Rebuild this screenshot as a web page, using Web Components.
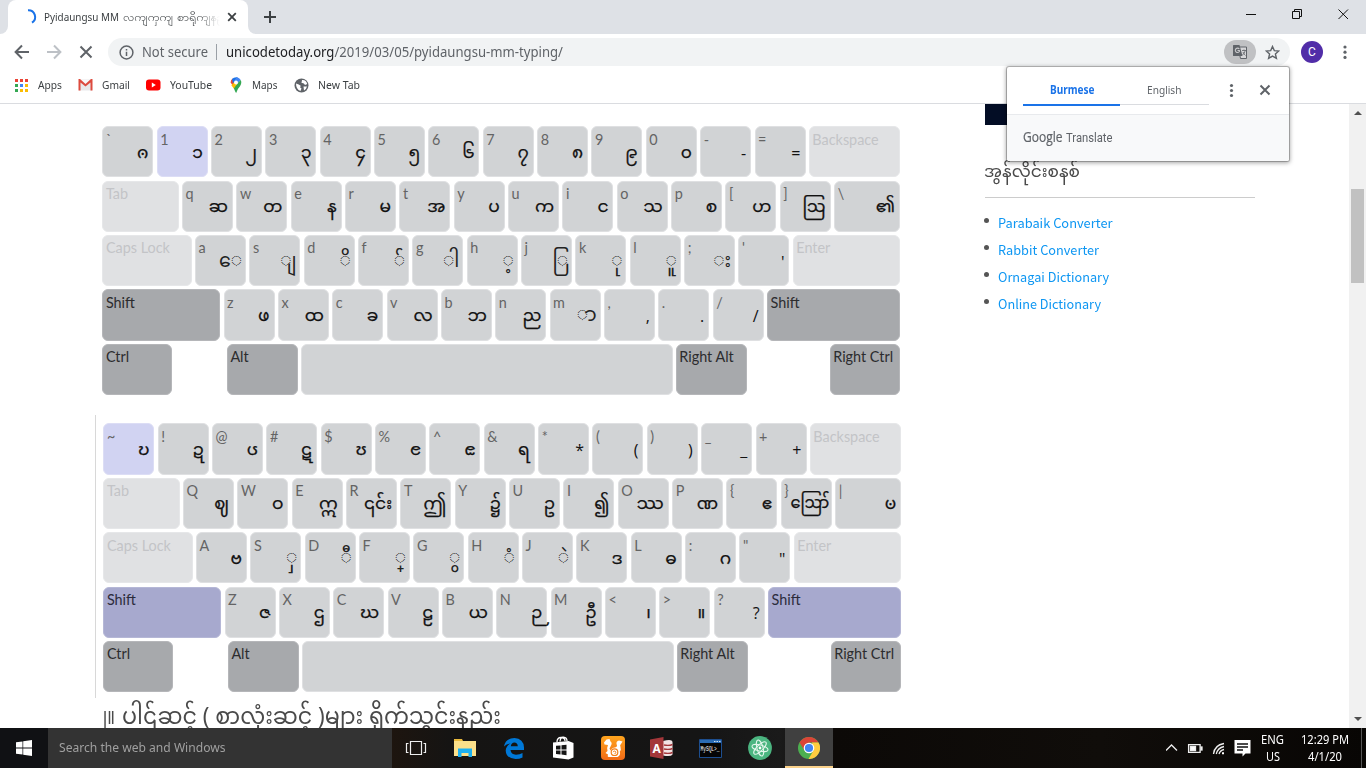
<!DOCTYPE html>
<html lang="en">
<head>
<meta charset="utf-8">
<title>Pyidaungsu MM</title>
<style>
html,body{margin:0;height:100%;overflow:hidden}
body{font-family:"Noto Sans","Liberation Sans",sans-serif}
</style>
</head>
<body>
<desktop-screen></desktop-screen>
<script>
const define = (name, html, setup) => customElements.define(name, class extends HTMLElement {
  connectedCallback() {
    if (this.shadowRoot) return;
    const root = this.attachShadow({mode: 'open'});
    const t = document.createElement('template');
    t.innerHTML = typeof html === 'function' ? html(this) : html;
    root.appendChild(document.importNode(t.content, true));
    if (setup) setup(this, root);
  }
});

/* A single line of text that is stretched or squeezed to the width in "w". */
define('fit-text', `<style>:host{display:block;flex:none;white-space:nowrap}span{display:inline-block;transform-origin:0 50%}</style><span><slot></slot></span>`,
  (el, root) => {
    const w = +el.getAttribute('w'), s = root.querySelector('span');
    const n = s.getBoundingClientRect().width;
    el.style.width = w + 'px';
    if (n) s.style.transform = `scaleX(${w / n})`;
  });

define('key-cap', el => {
  const g = el.getAttribute('glyph') || '';
  const mark = g[0] === '\u25CC';
  const cls = mark ? ' m' : g === 'ဪ' ? ' w' : g.charCodeAt(0) < 128 ? ' a' : '';
  return `<style>
  :host{display:block;box-sizing:border-box;height:51.2px;border-radius:6px;background:#d1d3d5;border:1px solid #dfe0e2;position:relative;color:#646464;font:14.4px/18px Lato,"Liberation Sans",sans-serif;flex:none}
  :host([kind=off]){background:#e0e1e3;border-color:#e6e7e9;color:#c3c4c7}
  :host([kind=mod]){background:#a7a9ac;border-color:#b5b6b9;color:#2c2c2e}
  :host([kind=on]){background:#d1d3f2;border-color:#dcddf5}
  :host([kind=hold]){background:#a7a9ce;border-color:#b5b7d6;color:#2c2c3c}
  :host([kind=none]){visibility:hidden}
  .l{display:block;padding:3.400px 0 0 2.500px;white-space:nowrap}
  .g{position:absolute;right:4px;top:9.500px;font:17px/34px "Pyidaungsu","Noto Sans Myanmar","Padauk","Myanmar Text",Lato,sans-serif;color:#111;-webkit-text-stroke:.25px #111;white-space:nowrap}
  .m{font-size:19px;-webkit-text-stroke:0;right:3px;top:10px;color:#222}
  .w{right:1px;font-size:16px}
  .a{font:16px/34px "Open Sans",sans-serif;-webkit-text-stroke:0;top:8.500px}
  </style><span class="l"><slot></slot></span>${g ? `<span class="g${cls}">${g.replace(/</g,'&lt;')}</span>` : ''}`;
});

const esc = s => s.replace(/&/g,'&amp;').replace(/</g,'&lt;').replace(/"/g,'&quot;');
const C = '\u25CC';
const boards = {
  base: {
    on: '1', shift: 'mod',
    rows: [
      ['`1234567890-=', ['ၐ','၁','၂','၃','၄','၅','၆','၇','၈','၉','၀','-','=']],
      ['qwertyuiop[]', ['ဆ','တ','န','မ','အ','ပ','က','င','သ','စ','ဟ','ဩ']],
      ["asdfghjkl;'", [C+'ေ',C+'ျ',C+'ိ',C+'်',C+'ါ',C+'့',C+'ြ',C+'ု',C+'ူ',C+'း',"'"]],
      ['zxcvbnm,./', ['ဖ','ထ','ခ','လ','ဘ','ည',C+'ာ',',','.','/']]
    ], last: ['\\','၏']
  },
  shift: {
    on: '~', shift: 'hold',
    rows: [
      ['~!@#$%^&*()_+', ['ဎ','ဍ','ၒ','ဋ','ၓ','ၔ','ၕ','ရ','*','(',')','_','+']],
      ['QWERTYUIOP{}', ['ဈ','ဝ','ဣ','၎င်း','ဤ','၌','ဥ','၍','ဿ','ဏ','ဧ','ဪ']],
      ['ASDFGHJKL:"', ['ဗ',C+'ှ',C+'ီ',C+'္',C+'ွ',C+'ံ',C+'ဲ','ဒ','ဓ','ဂ','"']],
      ['ZXCVBNM<>?', ['ဇ','ဌ','ဃ','ဠ','ယ','ဉ','ဦ','၊','။','?']]
    ], last: ['|','ၑ']
  }
};
define('key-board', el => {
  const b = boards[el.getAttribute('layer')];
  const key = (w, label, glyph, kind) => `<key-cap style="width:${w}px" ${kind ? `kind="${kind}"` : ''} ${glyph ? `glyph="${esc(glyph)}"` : ''}>${esc(label)}</key-cap>`;
  const ends = [
    ['', key(91.6,'Backspace','','off')],
    [key(76.3,'Tab','','off'), key(66,b.last[0],b.last[1])],
    [key(89.3,'Caps Lock','','off'), key(107.2,'Enter','','off')],
    [key(117.8,'Shift','',b.shift), key(133,'Shift','',b.shift)]
  ];
  return `<style>:host{display:flex;flex-direction:column;gap:3.2px;width:799px}div{display:flex;gap:3.35px}</style>` +
    b.rows.map((r, i) => `<div>${ends[i][0]}${[...r[0]].map((c, k) => key(51, c, r[1][k], c === b.on ? 'on' : '')).join('')}${ends[i][1]}</div>`).join('') +
    `<div>${key(70,'Ctrl','','mod')}${key(47.8,'','','none')}${key(70.7,'Alt','','mod')}${key(371.6,'','')}${key(70.7,'Right Alt','','mod')}${key(76.5,'','','none')}${key(70.7,'Right Ctrl','','mod')}</div>`;
});

define('browser-tabs', `<style>
:host{display:flex;height:34px;background:#dee1e6;flex:none}
.lead{width:8px;background:#fff}.lead i{display:block;height:34px;background:#dee1e6;border-radius:0 0 8px 0}
.tab{width:240px;background:#fff;border-radius:8px 8px 0 0;display:flex;align-items:center;box-sizing:border-box;padding-left:12px}
.t{width:176px;overflow:hidden;display:flex;gap:4px;margin-left:6px;font:11.500px/20px "Noto Sans",Padauk,sans-serif;color:#3c4043;-webkit-mask:linear-gradient(90deg,#000 88%,transparent)}
.rest{flex:1;background:#fff}.rest div{height:34px;background:#dee1e6;border-radius:0 0 0 8px;display:flex;align-items:center}
.plus{margin-left:15px}.win{margin-left:auto;display:flex}
.x{margin-left:7px}
</style>
<div class="lead"><i></i></div>
<div class="tab">
<svg width="18" height="18" viewBox="0 0 18 18"><path d="M8 2.2A6.8 6.8 0 0 1 12 14.7" fill="none" stroke="#1a73e8" stroke-width="2"/></svg>
<div class="t"><fit-text w="75">Pyidaungsu MM</fit-text><fit-text w="50">လကျကှကျ</fit-text><fit-text w="55">စာရိုကျနည်း</fit-text></div>
<svg class="x" width="10" height="10"><path d="M1.2 1.2l7.6 7.6M8.8 1.2L1.2 8.8" stroke="#3c4043" stroke-width="1.8"/></svg>
</div>
<div class="rest"><div>
<svg class="plus" width="14" height="14"><path d="M7 1v12M1 7h12" stroke="#3c4043" stroke-width="2"/></svg>
<svg class="win" width="121" height="34" viewBox="0 3 121 34" fill="none" stroke="#111" stroke-width="1"><path d="M1 17.500h10M47.500 14.500h7v7h-7zM49.500 14.500v-2h7v7h-2M93.500 12.500l9.500 9.500M103 12.500l-9.500 9.500"/></svg>
</div></div>`);

define('tool-bar', `<style>
:host{display:flex;align-items:center;height:36px;background:#fff;flex:none;padding-left:14px}
.nav{flex:none}
.omni{width:1182px;height:28px;border-radius:14px;background:#f1f3f4;margin-left:12px;display:flex;align-items:center;font-size:14px;line-height:28px;color:#5f6368;box-sizing:border-box;padding-left:11px}
.bar{width:1px;height:16px;background:#9aa0a6;margin:0 9px 0 8px}
.info{margin-right:8px}b{font-weight:400;color:#202124}
.tr{margin-left:auto;width:32px;height:24px;border-radius:12px;background:#c0c1c3;display:flex;align-items:center;justify-content:center}
.star{margin:0 10.500px 0 8.500px}
.av{width:22px;height:22px;border-radius:50%;background:#512da8;color:#fff;font:12px/22px Roboto,sans-serif;text-align:center;margin-left:11px}
.dots{margin-left:20px}
</style>
<svg class="nav" width="82" height="20" fill="none" stroke-width="2"><path d="M15 10H2M8 3.5L1.6 10 8 16.500" stroke="#5f6368"/><path d="M33 10h13M40 3.5l6.400 6.500L40 16.500" stroke="#bdc1c6"/><path d="M66.500 4.500l11 11M77.500 4.500l-11 11" stroke="#5f6368"/></svg>
<div class="omni">
<svg class="info" width="15" height="15" fill="none" stroke="#5f6368" stroke-width="1.500"><circle cx="7.500" cy="7.500" r="6.400"/><path d="M7.500 6.700v4.300M7.500 4v1.500"/></svg>
<fit-text w="66">Not secure</fit-text><span class="bar"></span><fit-text w="337"><b>unicodetoday.org</b>/2019/03/05/pyidaungsu-mm-typing/</fit-text>
<div class="tr"><svg width="16" height="16"><path d="M6 3h8.500v11.500H8.500z" fill="#d6d6d8" stroke="#5f6368"/><path d="M1.500 1H7.500L10.500 12H1.500Q1 12 1 11.500V1.500Q1 1 1.500 1z" fill="#5f6368"/><path d="M7.300 5A2.200 2.200 0 1 0 7.400 7.500V6.500H5.500" fill="none" stroke="#c8c8ca" stroke-width="1.100"/><path d="M10 6.500h4M12 5.500v1M13.300 6.500Q12.500 9.500 10.500 11M11 8Q12 10.500 13.500 11.500" fill="none" stroke="#5f6368" stroke-width=".8"/></svg></div>
<svg class="star" width="15" height="15"><path d="M7.500 1.500l1.800 4.100 4.500.4-3.400 3 1 4.400-3.900-2.300-3.900 2.300 1-4.400-3.400-3 4.500-.4z" fill="none" stroke="#5f6368" stroke-width="1.400"/></svg>
</div>
<div class="av">C</div>
<svg class="dots" width="4" height="16" fill="#5f6368"><circle cx="2" cy="3" r="1.600"/><circle cx="2" cy="8.200" r="1.600"/><circle cx="2" cy="13.400" r="1.600"/></svg>`);

define('bookmark-item', el => `<style>:host{display:flex;align-items:center;flex:none;font-size:11.500px;line-height:20px;color:#3c4043}div{display:flex;width:16px;margin-right:${el.getAttribute('gap') || 7}px}</style><div><slot name="icon"></slot></div><slot></slot>`);
define('bookmark-bar', `<style>
:host{display:flex;height:33px;align-items:center;border-bottom:1px solid #dadce0;background:#fff;padding:0 0 0 14px;flex:none;box-sizing:content-box}
bookmark-item{margin:-3px 16.400px 0 0}
</style>
<bookmark-item gap="8"><svg slot="icon" width="14" height="14"><path d="M1 1h3v3H1zM6 1h3v3H6zM11 1h3v3h-3z" fill="#ea4335"/><path d="M1 6h3v3H1zM1 11h3v3H1z" fill="#34a853"/><path d="M6 6h3v3H6z" fill="#4285f4"/><path d="M11 6h3v3h-3zM6 11h3v3H6zM11 11h3v3h-3z" fill="#fbbc04"/></svg><fit-text w="24">Apps</fit-text></bookmark-item>
<bookmark-item gap="7.500"><svg slot="icon" width="15" height="12"><path d="M1 .5h13v11H1z" fill="#e9e9ea"/><path d="M2.500 1L7.500 5 12.500 1z" fill="#f8f8f8"/><path d="M.5 0H2l5.500 5L13 0h1.500v11.500h-2V3.500L7.500 7.500l-5-4v8h-2z" fill="#dd4b3e"/></svg><fit-text w="28">Gmail</fit-text></bookmark-item>
<bookmark-item gap="7.500"><svg slot="icon" width="15" height="12"><rect y=".5" width="14.500" height="11" rx="3" fill="#f00"/><path d="M5.800 3.500v5l4-2.500z" fill="#fff"/></svg><fit-text w="42">YouTube</fit-text></bookmark-item>
<bookmark-item gap="8"><svg slot="icon" width="16" height="16"><path d="M2.600 5.500A5.500 5.500 0 0 1 4.500 1.500L8 5.500 5 9z" fill="#ea4335"/><path d="M4 2Q6-.2 9.700.3L5 6.500z" fill="#1a73e8"/><path d="M9 .2Q11.500.8 12.700 3L9 7 6 4z" fill="#4285f4"/><path d="M12.700 3Q14.200 6 12 9.200 9.500 12 8.800 14.500 8.500 16 8 15.700 7.500 15.500 7.200 14.500L5.500 10.500z" fill="#34a853"/><path d="M3.400 8.200L6 5.500l3.500 1L5.800 11.500z" fill="#fbbc04"/><circle cx="8" cy="5.500" r="2" fill="#fff"/></svg><fit-text w="25.500">Maps</fit-text></bookmark-item>
<bookmark-item gap="8"><svg slot="icon" width="15" height="15"><circle cx="7.500" cy="7.500" r="7" fill="#5f6368"/><path d="M2 5.500Q5 6 7 8 5 9 7.500 10.500L6.500 13Q2 11.500 2 5.500zM8 2Q12 1.500 13.200 6L11 7Q10 4.500 7.500 5zM9.500 8.500l3.500 0Q12 12 10 12.500z" fill="#fff"/></svg><fit-text w="42">New Tab</fit-text></bookmark-item>`);

define('site-page', `<style>
:host{display:flex;flex:1;min-height:0;overflow:hidden;background:#fff}
main{width:890px;padding:22.300px 0 0 95px;box-sizing:border-box;flex:none;margin-right:95px}
.k1{margin-left:7.400px}
.q{height:283px;border-left:1px solid #d8d8d8;margin-top:20px;padding:8.500px 0 0 7.400px;box-sizing:border-box}
h2{margin:-1px 0 0 1px;font:23.500px/44px "Pyidaungsu","Noto Sans Myanmar",Padauk,sans-serif;color:#4a4a4a;display:flex}
aside{width:270px;flex:none}
.img{height:21px;background:#030d25}
h3{margin:32px 0 0;height:40px;font:17px/32px "Pyidaungsu","Noto Sans Myanmar",Padauk,sans-serif;color:#4a4a4a;border-bottom:1px solid #ccc}
h3 fit-text{margin-left:-1px}
ul{list-style:none;margin:11px 0 0;padding:0}
li{display:flex;align-items:center;height:27px;font:13px/27px "Noto Sans CJK JP","Noto Sans",sans-serif;color:#0d96f2}
li:before{content:"";width:5px;height:5px;border-radius:50%;background:#555;margin:-4px 9px 0 -1.500px}
li fit-text{margin-top:-1px}
.sb{margin-left:auto;width:17px;background:#f1f1f1;display:flex;flex-direction:column;align-items:center;justify-content:space-between;padding:6px 0 6px}
.sb i{width:13px;height:94px;background:#c1c1c1}
</style>
<main><key-board class="k1" layer="base"></key-board><div class="q"><key-board layer="shift"></key-board></div>
<h2><fit-text w="19">၂။</fit-text><fit-text w="379" style="margin-left:7px">ပါဌ်ဆင့် ( စာလုံးဆင့် )များ ရိုက်သွင်းနည်း</fit-text></h2></main>
<aside><div class="img"></div><h3><fit-text w="96">အွန်လိုင်းစနစ်</fit-text></h3>
<ul><li><fit-text w="114.500">Parabaik Converter</fit-text></li><li><fit-text w="101">Rabbit Converter</fit-text></li><li><fit-text w="111">Ornagai Dictionary</fit-text></li><li><fit-text w="103">Online Dictionary</fit-text></li></ul></aside>
<div class="sb"><svg width="8" height="5"><path d="M0 5l4-4 4 4z" fill="#505050"/></svg><i style="margin:74px 0 auto"></i><svg width="8" height="5"><path d="M0 0l4 4 4-4z" fill="#505050"/></svg></div>`);

define('translate-bubble', `<style>
:host{position:absolute;left:1007px;top:67px;width:282px;height:94px;background:#fff;border-radius:2px;box-shadow:0 0 0 1px rgba(0,0,0,.22),0 1px 4px 1px rgba(0,0,0,.35);overflow:visible;display:flex;flex-direction:column}
.top{display:flex;height:47px;padding-left:16px;font-size:11.500px;color:#5f6368;border-bottom:1px solid #e8eaed}
.tab{height:38px;border-bottom:1px solid #dadce0;box-sizing:border-box;width:89px;display:flex;justify-content:center;line-height:46px}
.tab.a{width:97px;border-bottom:2px solid #1a73e8;color:#1a73e8;font-weight:700;height:39px;padding-left:2px}
.bot{flex:1;background:#f8f9fa;display:flex;align-items:center;padding-left:16px;color:#5f6368;border-radius:0 0 2px 2px}
.g{font:14px/20px "Open Sans",sans-serif;margin-right:3px;-webkit-text-stroke:.2px}.t{font:13.500px/20px Roboto,sans-serif}
.bot fit-text{margin-top:-2px}
svg{margin-left:20px}
</style><div class="top"><div class="tab a"><fit-text w="44.500">Burmese</fit-text></div><div class="tab"><fit-text w="34.500">English</fit-text></div>
<svg width="44" height="46"><g fill="#5f6368"><circle cx="2.500" cy="18.500" r="1.600"/><circle cx="2.500" cy="23.500" r="1.600"/><circle cx="2.500" cy="28.500" r="1.600"/></g><path d="M31.500 18.500l9 9M40.500 18.500l-9 9" stroke="#5f6368" stroke-width="2"/></svg></div>
<div class="bot"><fit-text class="g" w="39.500">Google</fit-text><fit-text class="t" w="46.500">Translate</fit-text></div>`);

define('task-bar', `<style>
:host{display:flex;height:40px;flex:none;background:linear-gradient(90deg,#101114 0,#101114 48px,#1d150f 392px,#151413 450px,#151515 700px,#1a1a1a 780px,#0c0907 835px,#100d0a 1100px,#080604 1366px);color:#fff}
.c{width:49.150px;display:flex;align-items:center;justify-content:center;flex:none;box-sizing:border-box}
.s{width:48px}.q{width:343.500px;background:#333;color:#a0a0a0;font-size:12.500px;line-height:39px;padding-left:11px;box-sizing:border-box}
.on{background:#404040;border-bottom:2px solid #fbd28b;width:48px}
.tray{margin-left:auto;display:flex;align-items:center;font-size:12px;line-height:17px;text-align:center}
.two{display:flex;flex-direction:column;align-items:center}
.end{width:1px;height:40px;background:#555;margin:0 4px 0 12px}
</style>
<div class="c s"><svg width="16" height="16" fill="#fff"><path d="M0 2.300l6.500-.9v6.200H0zM7.200 1.300L16 0v7.600H7.200zM0 8.400h6.500v6.200L0 13.700zM7.200 8.400H16V16l-8.800-1.300z"/></svg></div>
<div class="q"><fit-text w="166.500">Search the web and Windows</fit-text></div>
<div class="c"><svg width="22" height="16" fill="none" stroke="#eee"><path d="M5.500 1.500h11v13h-11zM3.500 3.500h-2v9h2M18.500 3.500h2v9h-2" stroke-width="1.200"/></svg></div>
<div class="c"><svg width="22" height="20"><path d="M0 1h8l1 2h13v15H0z" fill="#e9b93c"/><path d="M0 3h22v15H0z" fill="#fbe08a"/><path d="M4 19V10.500h14V19h-3.500v-4h-7v4z" fill="#1cb0f0"/></svg></div>
<div class="c"><svg width="22" height="22"><path d="M1 9.500Q2.500 1 11.500 1 20.500 1.500 21 10.500V13H7.500Q8 17.500 13 17.700 17 17.500 19.500 16V20.500Q16.500 22 12.500 22 3 21.500 2.700 13.500 3 9 7.500 6.500 3.500 7 1 9.500zM7.800 9.200h7Q14.500 5.500 11.300 5.500 8.500 5.600 7.800 9.200z" fill="#0078d7" fill-rule="evenodd"/></svg></div>
<div class="c"><svg width="22" height="24"><path d="M5 6Q5 1.500 9 1.500 13 1.500 13 5M8 5.500Q8.500 1 11.500 1.200 15 1.500 15 5" fill="none" stroke="#fff" stroke-width="1.300"/><path d="M1 6.500L16.500 5 21.500 7v14.500L16.500 23.500 1 21.500z" fill="#fff"/><path d="M4 9.800l4.500-.4v4H4zM9.500 9.300l5-.5v4.600h-5zM4 14.500h4.500v4l-4.500-.4zM9.500 14.500h5v4.700l-5-.6z" fill="#151515"/></svg></div>
<div class="c"><svg width="24" height="24"><defs><linearGradient id="u" x2="0" y2="1"><stop stop-color="#ffa51e"/><stop offset="1" stop-color="#f26a16"/></linearGradient></defs><rect width="24" height="24" rx="4" fill="url(#u)"/><path d="M3 6.500L5.500 3.500 8.500 3 9.500 5.500Q11.500 7 10 9.500L8.500 12.500 9.500 14.500Q11 11.500 14 11.500 17 10.500 15.500 8 15 5 18 4.500L21.500 5.500 20 8Q18.500 9 19.500 11 20.500 14 18.800 15.500 20 19 16.500 21H7.500Q6 20.500 7 18.500L4.500 17 6.500 15Q5.500 12 7 9L3.500 8.500z" fill="#fff"/><circle cx="13.500" cy="16.200" r="3.300" fill="none" stroke="#f4801a" stroke-width="1.200"/><path d="M12.200 16.200a1.300 1.300 0 1 1 1.300 1.500" fill="none" stroke="#f4801a"/></svg></div>
<div class="c"><svg width="23" height="22"><path d="M13 4Q22 1.500 22.500 5V17.500Q21 20 13 18.500z" fill="#f2e3e4"/><path d="M14 8Q19 9 22.500 7.500M14 12Q19 13 22.500 11.500M14 16Q19 17 22.500 15.500" fill="none" stroke="#a4373a" stroke-width="1.400"/><path d="M0 2.500L13.500 0v22L0 19.500z" fill="#a4373a"/><text x="6.700" y="15.500" text-anchor="middle" font-family="Noto Sans" font-size="12" font-weight="700" fill="#fff">A</text></svg></div>
<div class="c"><svg width="23" height="19"><path d="M.5.500h22v18H.5z" fill="#050505" stroke="#1d4e8f"/><path d="M1 1h21v3H1z" fill="#2b6cb5"/><path d="M15 2h1.500v1H15zM17.500 2H19v1h-1.500zM20 2h1.500v1H20z" fill="#cde"/><text x="1.500" y="11.500" font-family="Liberation Mono" font-size="6.500" textLength="19" lengthAdjust="spacingAndGlyphs" fill="#fff">MySQL&gt;_</text></svg></div>
<div class="c"><svg width="24" height="24" viewBox="-12 -12 24 24"><circle r="11.900" fill="#4bb580"/><g fill="none" stroke="#e4f6ec"><ellipse rx="3" ry="8.200" transform="rotate(-15)"/><ellipse rx="3" ry="8.200" transform="rotate(45)"/><ellipse rx="3" ry="8.200" transform="rotate(105)"/></g><circle r="1.400" fill="#fff"/></svg></div>
<div class="c on"><svg width="22" height="22" viewBox="-11 -11 22 22" style="margin-top:2px"><circle r="11" fill="#4caf50"/><path d="M-9.500-5.500A11 11 0 0 1 9.500-5.500H0L-4.500 2.500z" fill="#db4437"/><path d="M9.500-5.500A11 11 0 0 1-.5 11L4.500 2.500 3-5.500z" fill="#ffcd40"/><circle r="5.300" fill="#fff"/><circle r="4.100" fill="#4285f4"/></svg></div>
<div class="tray">
<svg width="90" height="24" fill="none" stroke="#eee" stroke-width="1.300"><path d="M0 14.500L5.500 9l5.500 5.500"/><path d="M22.600 8.600h11.500v7.800H22.600z"/><path d="M35 11h1v3h-1z"/><path d="M24.500 10.500h5v4h-5z" fill="#fff"/><path d="M47.500 18Q48.500 9 58 7.500M50.300 18Q51.500 12 58 10.500M53 18Q54 14.500 58 13.500"/><path d="M56 16.200h2v2h-2z" fill="#fff" stroke="none"/><path d="M68.500 4h16v13.500h-5l-3 3v-3h-8z" fill="#fff" stroke="none"/><path d="M71 8h11M71 11h11M71 14h6" stroke="#111"/></svg>
<div class="two" style="margin-left:5px"><fit-text w="23">ENG</fit-text><fit-text w="14">US</fit-text></div>
<div class="two" style="margin-left:17px"><fit-text w="48">12:29 PM</fit-text><fit-text w="34">4/1/20</fit-text></div>
<div class="end"></div></div>`);

define('desktop-screen', `<style>:host{display:flex;flex-direction:column;width:1366px;height:768px;position:relative;overflow:hidden;background:#fff}</style>
<browser-tabs></browser-tabs><tool-bar></tool-bar><bookmark-bar></bookmark-bar><site-page></site-page><task-bar></task-bar><translate-bubble></translate-bubble>`);
</script>
</body>
</html>
